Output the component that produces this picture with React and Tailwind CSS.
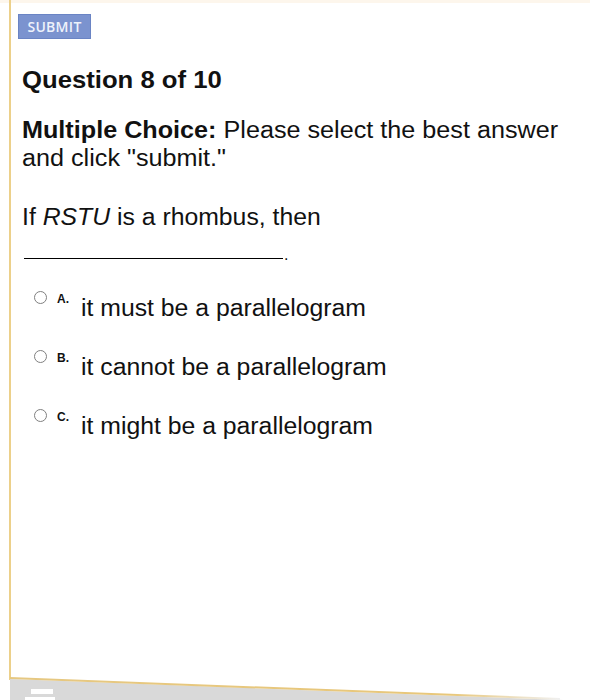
import React from "react";

const options = [
  { letter: "A.", text: "it must be a parallelogram" },
  { letter: "B.", text: "it cannot be a parallelogram" },
  { letter: "C.", text: "it might be a parallelogram" },
];

export default function App() {
  return (
    <div className="relative w-[590px] h-[700px] overflow-hidden bg-white text-[#111]" style={{ fontFamily: '"Liberation Sans", Arial, sans-serif' }}>
      <div className="absolute left-0 top-0 w-[590px] h-[3px] bg-[#fdf6ec]" />
      <div className="absolute left-[9px] top-0 w-[2px] h-[680px] bg-[#ecd08a]" />
      <div className="flex flex-col pl-[22px] pt-[14px]">
        <div className="ml-[-4px] w-[73px] h-[25px] bg-[#7b93cf] border border-[#6a84c4] flex items-center justify-center text-[14px] font-semibold text-[#eef2fb] tracking-[0.3px]" style={{ fontFamily: '"Open Sans", sans-serif' }}>
          SUBMIT
        </div>
        <div className="mt-[28px] h-[26px]">
          <span className="inline-block origin-left scale-x-[1.07] text-[24px] font-bold leading-[26px]">Question 8 of 10</span>
        </div>
        <div className="mt-[23px] w-[494px] origin-left scale-x-[1.095] text-[23px] leading-[28px]">
          <span className="font-bold">Multiple Choice:</span> Please select the best answer and click "submit."
        </div>
        <div className="mt-[32px] h-[26px]">
          <span className="inline-block origin-left scale-x-[1.077] text-[23px] leading-[26px]">
            If <i>RSTU</i> is a rhombus, then
          </span>
        </div>
        <div className="mt-[20px] flex items-end h-[10px]">
          <div className="w-[259px] h-[1px] bg-black ml-[2px] mb-[1px]" />
          <span className="text-[16px] leading-[10px] ml-[1px]">.</span>
        </div>
        <div className="mt-[31px] flex flex-col gap-[29px]">
          {options.map((o) => (
            <div key={o.letter} className="flex items-start h-[30px]">
              <div className="ml-[12px] w-[13px] h-[13px] rounded-full border-[1.5px] border-[#808080]" />
              <span className="ml-[10px] mt-[2px] w-[24px] text-[12px] font-bold leading-[13px]">{o.letter}</span>
              <span className="inline-block mt-[4px] origin-left scale-x-[1.077] text-[23px] leading-[26px]">{o.text}</span>
            </div>
          ))}
        </div>
      </div>
      <svg className="absolute left-0 top-[670px]" width="590" height="30" viewBox="0 0 590 30">
        <defs>
          <linearGradient id="ln" x1="0" x2="1" y1="0" y2="0">
            <stop offset="0" stopColor="#e6c882" />
            <stop offset="0.8" stopColor="#e8c77a" />
            <stop offset="1" stopColor="#f0f0f0" />
          </linearGradient>
        </defs>
        <polygon points="10,9 590,31 590,30 10,30" fill="#d9d9d9" />
        <line x1="10" y1="8" x2="560" y2="29" stroke="url(#ln)" strokeWidth="2" />
        <rect x="31" y="19" width="22" height="5" fill="#ffffff" />
        <rect x="25" y="27" width="30" height="4" fill="#ffffff" />
      </svg>
    </div>
  );
}
